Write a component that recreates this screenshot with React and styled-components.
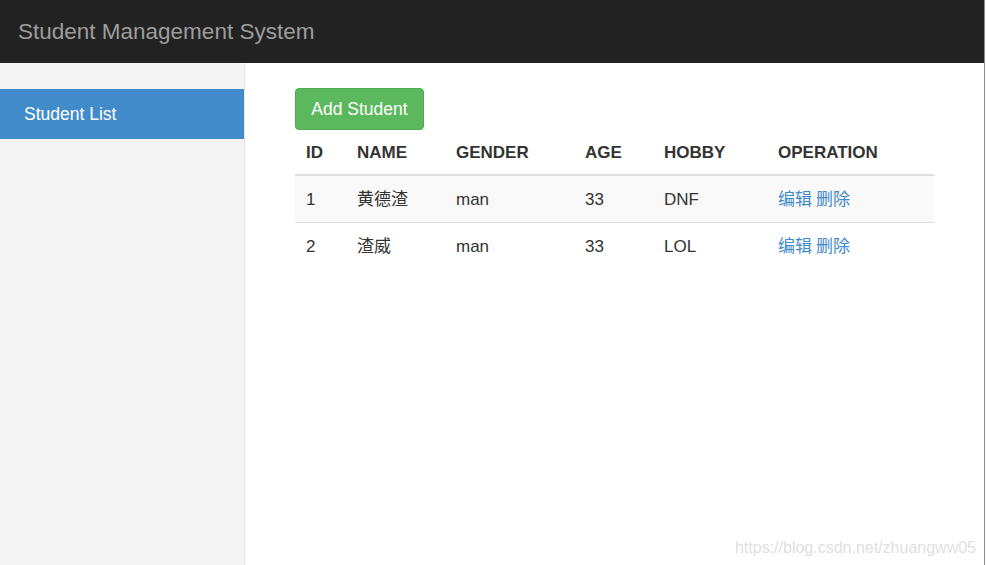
import React from "react";
import styled, { createGlobalStyle } from "styled-components";

const Global = createGlobalStyle`
  html, body { margin: 0; padding: 0; background: #fff; }
  body { font-family: "Liberation Sans", Arial, "Noto Sans CJK SC", sans-serif; color: #333; }
  * { box-sizing: border-box; }
`;

const Page = styled.div`
  position: relative;
  width: 985px;
  height: 565px;
  display: flex;
  flex-direction: column;
  border-right: 1px solid #8c8c8c;
  overflow: hidden;
`;

const Navbar = styled.header`
  height: 63px;
  flex: none;
  background: #222;
  display: flex;
  align-items: center;
  padding-left: 18px;
`;

const Brand = styled.span`
  font-size: 22.5px;
  color: #9d9d9d;
  line-height: 1;
  margin-top: 1px;
`;

const Body = styled.div`
  flex: 1;
  display: flex;
`;

const Sidebar = styled.nav`
  width: 245px;
  flex: none;
  background: #f4f4f4;
  border-right: 1px solid #e6e6e6;
  padding-top: 26px;
`;

const NavItem = styled.div`
  height: 50px;
  display: flex;
  align-items: center;
  padding-left: 24px;
  font-size: 17.5px;
  color: ${(p) => (p.$active ? "#fff" : "#428bca")};
  background: ${(p) => (p.$active ? "#428bca" : "transparent")};
`;

const Main = styled.main`
  flex: 1;
  padding: 25px 50px 0 50px;
`;

const AddButton = styled.button`
  height: 42px;
  width: 129px;
  padding: 0;
  font-family: inherit;
  font-size: 17.5px;
  color: #fff;
  background: #5cb85c;
  border: 1px solid #4cae4c;
  border-radius: 4px;
  display: block;
`;

const Table = styled.table`
  width: 639px;
  margin-top: 1px;
  border-collapse: collapse;
  table-layout: fixed;
  font-size: 17px;
  line-height: 24px;
`;

const Th = styled.th`
  text-align: left;
  font-weight: bold;
  height: 44px;
  padding: 0 11px;
  border-bottom: 2px solid #ddd;
  color: #333;
`;

const Row = styled.tr`
  background: ${(p) => (p.$striped ? "#f9f9f9" : "transparent")};
`;

const Td = styled.td`
  height: 47px;
  padding: 3px 11px 0;
  vertical-align: middle;
  line-height: 24px;
  border-top: ${(p) => (p.$topBorder ? "1px solid #ddd" : "none")};
`;

const Link = styled.a`
  color: #428bca;
  text-decoration: none;
  & + & { margin-left: 4px; }
`;

const Watermark = styled.div`
  position: absolute;
  right: 8px;
  bottom: 8px;
  font-size: 16px;
  color: #e0e0e0;
`;

const cols = [51, 99, 129, 79, 114, 167];
const heads = ["ID", "NAME", "GENDER", "AGE", "HOBBY", "OPERATION"];
const students = [
  { id: 1, name: "黄德渣", gender: "man", age: 33, hobby: "DNF" },
  { id: 2, name: "渣威", gender: "man", age: 33, hobby: "LOL" },
];

export default function App() {
  return (
    <>
      <Global />
      <Page>
        <Navbar>
          <Brand>Student Management System</Brand>
        </Navbar>
        <Body>
          <Sidebar>
            <NavItem $active>Student List</NavItem>
          </Sidebar>
          <Main>
            <AddButton>Add Student</AddButton>
            <Table>
              <colgroup>
                {cols.map((w, i) => (
                  <col key={i} style={{ width: w }} />
                ))}
              </colgroup>
              <thead>
                <tr>
                  {heads.map((h) => (
                    <Th key={h}>{h}</Th>
                  ))}
                </tr>
              </thead>
              <tbody>
                {students.map((s, i) => {
                  const b = i > 0;
                  return (
                    <Row key={s.id} $striped={i % 2 === 0}>
                      <Td $topBorder={b}>{s.id}</Td>
                      <Td $topBorder={b}>{s.name}</Td>
                      <Td $topBorder={b}>{s.gender}</Td>
                      <Td $topBorder={b}>{s.age}</Td>
                      <Td $topBorder={b}>{s.hobby}</Td>
                      <Td $topBorder={b}>
                        <Link href="#">编辑</Link>
                        <Link href="#">删除</Link>
                      </Td>
                    </Row>
                  );
                })}
              </tbody>
            </Table>
          </Main>
        </Body>
        <Watermark>https://blog.csdn.net/zhuangww05</Watermark>
      </Page>
    </>
  );
}
